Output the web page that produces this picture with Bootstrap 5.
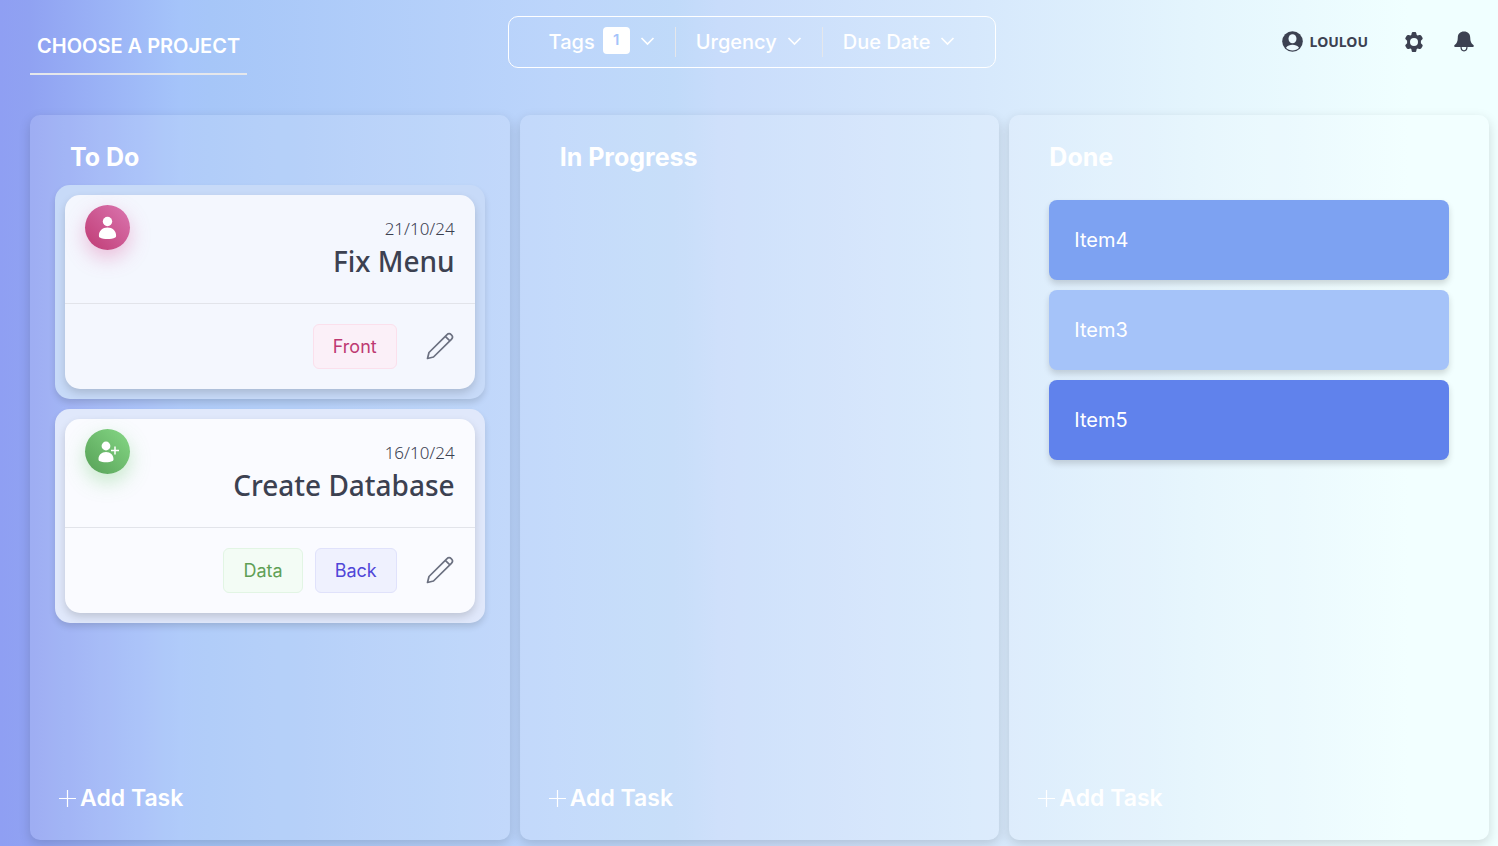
<!DOCTYPE html>
<html lang="en">
<head>
<meta charset="utf-8">
<meta name="viewport" content="width=device-width, initial-scale=1">
<title>Task board</title>
<link rel="stylesheet" href="https://cdn.jsdelivr.net/npm/bootstrap@5.3.0/dist/css/bootstrap.min.css">
<style>
  body {
    font-family: Inter, sans-serif;
    color: #3c4151;
    background: linear-gradient(90deg, #8f9ff3 0%, #90a2f2 2%, #a5c4fa 12%, #a6c6f8 14%, #bcd5fb 37%, #c0daf9 45%, #c8dcfb 48%, #d6e8fc 65%, #e4f5fd 80%, #f0ffff 94%, #f0ffff 100%);
  }
  .topbar { padding: 16px 9px 0 30px; height: 115px; }
  .side { flex: 1 1 0; }
  .project { font-size: 20px; line-height: 30px; font-weight: 600; color: #fff; padding: 15px 7px 12px; border: 0; border-bottom: 2px solid #e5e7eb; border-radius: 0; }
  .filters { border: 1px solid #fff; border-radius: 10px; height: 52px; padding: 0 20px; }
  .filter { background: none; border: 0; color: #fff; font-size: 20px; line-height: 30px; font-weight: 500; padding: 0 20px; gap: 8px; }
  .filter + .filter { border-left: 1px solid #e5e7eb; }
  .filter svg { margin: 0 0 2px 2px; }
  .filter-count { background: #fff; color: #a5c4fa; border-radius: 4px; width: 27px; height: 27px; margin-bottom: 3px; font-size: 15px; line-height: 26px; font-weight: 600; }
  .user { font-family: "Noto Sans", sans-serif; font-size: 14px; font-weight: 700; color: #3c4151; gap: 7px; }
  .tools { gap: 36px; padding: 15px 15px 0 0; }
  .tool { background: none; border: 0; padding: 0; color: #3c4151; line-height: 1; }
  .tools .tool:last-child { margin-left: -6px; }
  .board { gap: 10px; padding: 0 9px 6px 30px; }
  .lane { flex: 1 1 0; min-width: 0; background: rgba(255,255,255,.13); border-radius: 10px; box-shadow: 0 4px 12px rgba(0,0,0,.15); padding: 25px; }
  .lane-title { font-size: 25px; line-height: 34px; font-weight: 700; color: #fff; margin: 0 0 11px; padding-left: 15px; }
  .tasks { gap: 10px; }
  .task { border-radius: 15px; padding: 10px; box-shadow: 0 4px 6px rgba(0,0,0,.12); }
  .task-blue { background: #c7daf8; }
  .task-pale { background: #e0e8fb; }
  .task-in { border-radius: 15px; box-shadow: 0 4px 8px rgba(0,0,0,.15); }
  .task-blue .task-in { background: #f4f7fe; }
  .task-pale .task-in { background: #fafbff; }
  .task-top { padding: 10px 20px 0; height: 109px; border-bottom: 1px solid #e2e4ea; }
  .task-foot { padding: 20px; height: 85px; gap: 12px; }
  .task-foot .tool { color: #6b7080; margin-left: 16px; }
  .who { width: 45px; height: 45px; border: 0; border-radius: 50%; padding: 0; }
  .who-pink { background: linear-gradient(45deg, #bf3b74, #db76b0); box-shadow: 0 8px 20px rgba(219,80,150,.35); }
  .who-green { background: linear-gradient(45deg, #56a056, #86d886); box-shadow: 0 8px 20px rgba(100,200,100,.35); }
  .due { font-family: "Noto Sans", sans-serif; font-size: 17px; line-height: 24px; font-weight: 300; padding-top: 12px; }
  .task-name { font-family: "Noto Sans", sans-serif; font-size: 28px; line-height: 40px; font-weight: 500; margin: 0; }
  .tag { font-size: 18px; line-height: 27px; padding: 8px 19px; border-radius: 6px; border: 1px solid; }
  .tag-pink { color: #be3a72; background: #fbf0f8; border-color: #fbe0ec; }
  .tag-green { color: #5fa055; background: #f3fcf5; border-color: #e2f5e4; }
  .tag-blue { color: #4f46d8; background: #eff1fe; border-color: #e0e2fb; }
  .items { gap: 10px; padding: 15px 15px 0; }
  .item { height: 80px; border-radius: 8px; padding: 0 25px; color: #fff; font-size: 20px; box-shadow: 0 4px 6px rgba(0,0,0,.15); }
  .item-a { background: #7da2f2; }
  .item-b { background: #a5c3f9; }
  .item-c { background: #6082ec; }
  .add { background: none; border: 0; padding: 0; margin-left: 4px; color: #fff; font-size: 23px; line-height: 34px; font-weight: 600; gap: 4px; }
</style>
</head>
<body class="min-vh-100 d-flex flex-column">
<header class="topbar d-flex align-items-start">
  <div class="side"><button type="button" class="project btn">CHOOSE A PROJECT</button></div>
  <div class="filters d-flex align-items-center">
    <button type="button" class="filter d-flex align-items-center">Tags <span class="filter-count text-center">1</span>
      <svg width="15" height="10" viewBox="0 0 15 10" fill="none" stroke="currentColor" stroke-width="1.700"><path d="M1.500 2l6 6 6-6"/></svg></button>
    <button type="button" class="filter d-flex align-items-center">Urgency
      <svg width="15" height="10" viewBox="0 0 15 10" fill="none" stroke="currentColor" stroke-width="1.700"><path d="M1.500 2l6 6 6-6"/></svg></button>
    <button type="button" class="filter d-flex align-items-center">Due Date
      <svg width="15" height="10" viewBox="0 0 15 10" fill="none" stroke="currentColor" stroke-width="1.700"><path d="M1.500 2l6 6 6-6"/></svg></button>
  </div>
  <nav class="side tools d-flex justify-content-end align-items-center" aria-label="Account">
    <a href="#" class="user d-flex align-items-center text-decoration-none">
      <svg width="21" height="21" viewBox="0 0 21 21"><circle cx="10.500" cy="10.500" r="10.300" fill="#3c4151"/><ellipse cx="10.500" cy="7.700" rx="4" ry="4.500" fill="#ecf9fe"/><path d="M4 16.700c1.500-2.200 4-2.900 6.500-2.900s5 .7 6.500 2.900c-1.700 1.800-4 2.800-6.500 2.800S5.700 18.500 4 16.700z" fill="#ecf9fe"/></svg>
      LOULOU</a>
    <button type="button" class="tool" aria-label="Settings">
      <svg width="20" height="20" viewBox="2 2 20 20" fill="currentColor"><path fill-rule="evenodd" d="M9.600 3.600C9.700 2.600 10.200 2 11 2h2c.8 0 1.300.6 1.400 1.600l.3 1.400 1 .6 1.500-.5c.9-.3 1.700-.1 2.100.6l1.200 2c.4.7.2 1.500-.6 2.100l-1 1v2.400l1 1c.8.6 1 1.400.6 2.100l-1.200 2c-.4.7-1.200.9-2.100.6l-1.500-.5-1 .6-.3 1.400c-.1 1-.6 1.600-1.400 1.600h-2c-.8 0-1.300-.6-1.400-1.600L9.300 19l-1-.6-1.500.5c-.9.3-1.700.1-2.100-.6l-1.200-2c-.4-.7-.2-1.500.6-2.100l1-1v-2.400l-1-1c-.8-.6-1-1.400-.6-2.100l1.200-2c.4-.7 1.200-.9 2.100-.6l1.500.5 1-.6zM12 8a4 4 0 1 0 0 8 4 4 0 0 0 0-8z"/></svg></button>
    <button type="button" class="tool" aria-label="Notifications">
      <svg width="20" height="21" viewBox="0 0 20 21" fill="currentColor"><path d="M10 .5c-3.900 0-6.200 2.400-6.200 6 0 4-1.300 6-2.900 7.200-1.200 1-.8 2.300.8 2.300h16.600c1.600 0 2-1.300.8-2.300-1.600-1.200-2.900-3.200-2.900-7.200 0-3.600-2.300-6-6.200-6z"/><path d="M7 15.500c0 3 1.200 4.300 3 4.300s3-1.300 3-4.300" fill="none" stroke="currentColor" stroke-width="1.200"/></svg></button>
  </nav>
</header>

<main class="board d-flex flex-grow-1 align-items-stretch">
  <section class="lane d-flex flex-column">
    <h2 class="lane-title">To Do</h2>
    <div class="tasks d-grid">
      <article class="task task-blue"><div class="task-in">
        <div class="task-top d-flex justify-content-between align-items-start">
          <button type="button" class="who who-pink d-flex align-items-center justify-content-center" aria-label="Assignee">
            <svg width="19" height="24" viewBox="0 0 19 24" fill="#fff"><circle cx="9.500" cy="5.500" r="4.700"/><path d="M9.500 11.500c-5 0-8.600 3.500-8.600 7.700 0 1.800.3 2 .9 2.300 1.800 1 5 1.500 7.700 1.500s5.900-.5 7.700-1.500c.6-.3.900-.5.900-2.300 0-4.200-3.600-7.700-8.600-7.700z"/></svg></button>
          <div class="text-end"><div class="due">21/10/24</div><h3 class="task-name">Fix Menu</h3></div>
        </div>
        <div class="task-foot d-flex justify-content-end align-items-center">
          <span class="tag tag-pink">Front</span>
          <button type="button" class="tool" aria-label="Edit"><svg width="30" height="30" viewBox="0 0 30 30" fill="none" stroke="currentColor" stroke-width="1.700" stroke-linejoin="round"><path d="M2.500 26.500L4 20.500 21.800 2.800a3.200 3.200 0 0 1 4.600 4.600L8.500 25zM20.300 4.300l4.600 4.600"/></svg></button>
        </div>
      </div></article>
      <article class="task task-pale"><div class="task-in">
        <div class="task-top d-flex justify-content-between align-items-start">
          <button type="button" class="who who-green d-flex align-items-center justify-content-center" aria-label="Add assignee">
            <svg width="22" height="22" viewBox="0 0 22 22" fill="#fff"><circle cx="9" cy="5" r="4.400"/><path d="M9 11c-4.400 0-7.500 3.200-7.500 7 0 1.200.3 1.600.9 1.900 1.600.9 4.300 1.300 6.600 1.300s5-.4 6.600-1.300c.6-.3.900-.7.900-1.900 0-3.800-3.100-7-7.500-7z"/><path d="M18 5.500v8M14 9.500h8" stroke="#fff" stroke-width="1.500"/></svg></button>
          <div class="text-end"><div class="due">16/10/24</div><h3 class="task-name">Create Database</h3></div>
        </div>
        <div class="task-foot d-flex justify-content-end align-items-center">
          <span class="tag tag-green">Data</span>
          <span class="tag tag-blue">Back</span>
          <button type="button" class="tool" aria-label="Edit"><svg width="30" height="30" viewBox="0 0 30 30" fill="none" stroke="currentColor" stroke-width="1.700" stroke-linejoin="round"><path d="M2.500 26.500L4 20.500 21.800 2.800a3.200 3.200 0 0 1 4.600 4.600L8.500 25zM20.300 4.300l4.600 4.600"/></svg></button>
        </div>
      </div></article>
    </div>
    <button type="button" class="add d-flex align-items-center mt-auto align-self-start"><svg width="17" height="17" viewBox="0 0 17 17" stroke="currentColor" stroke-width="1.200"><path d="M8.500 0v17M0 8.500h17"/></svg>Add Task</button>
  </section>

  <section class="lane d-flex flex-column">
    <h2 class="lane-title">In Progress</h2>
    <button type="button" class="add d-flex align-items-center mt-auto align-self-start"><svg width="17" height="17" viewBox="0 0 17 17" stroke="currentColor" stroke-width="1.200"><path d="M8.500 0v17M0 8.500h17"/></svg>Add Task</button>
  </section>

  <section class="lane d-flex flex-column">
    <h2 class="lane-title">Done</h2>
    <div class="items d-grid">
      <div class="item item-a d-flex align-items-center">Item4</div>
      <div class="item item-b d-flex align-items-center">Item3</div>
      <div class="item item-c d-flex align-items-center">Item5</div>
    </div>
    <button type="button" class="add d-flex align-items-center mt-auto align-self-start"><svg width="17" height="17" viewBox="0 0 17 17" stroke="currentColor" stroke-width="1.200"><path d="M8.500 0v17M0 8.500h17"/></svg>Add Task</button>
  </section>
</main>
<script src="https://cdn.jsdelivr.net/npm/bootstrap@5.3.0/dist/js/bootstrap.bundle.min.js"></script>
</body>
</html>
